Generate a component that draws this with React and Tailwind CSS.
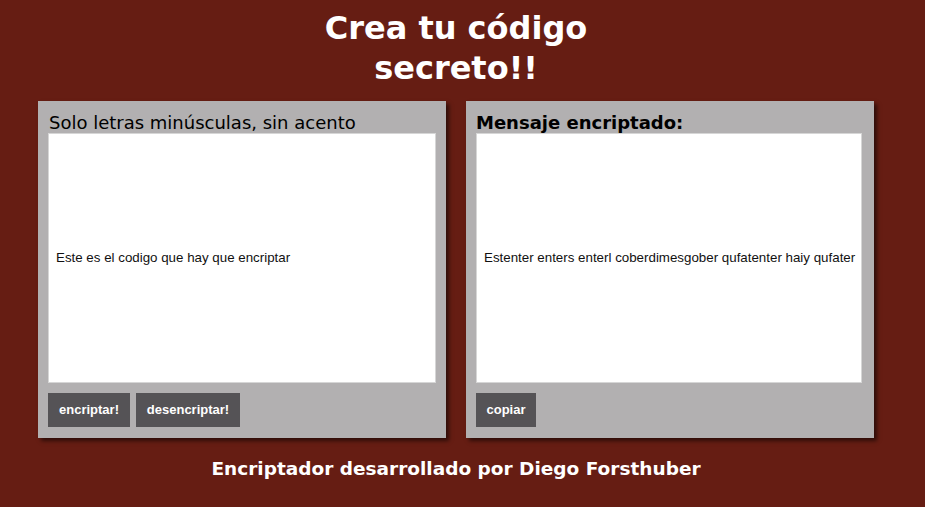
export default function App() {
  return (
    <div className="min-h-[507px] w-full bg-[#661d13] flex flex-col items-center pr-[13px]">
      <h1 className="mt-[8px] w-[300px] text-center text-white font-bold text-[32px] leading-[40px] font-['DejaVu_Sans',sans-serif]">
        Crea tu código secreto!!
      </h1>
      <div className="mt-[13px] flex gap-[20px]">
        <div className="w-[408px] h-[337px] bg-[#b2b0b1] shadow-[3px_3px_4px_rgba(0,0,0,0.55)] pt-[11px] pl-[10px] pr-[10px] flex flex-col">
          <div className="text-[18px] leading-[21px] text-black font-['DejaVu_Sans',sans-serif] pl-[1px]">
            Solo letras minúsculas, sin acento
          </div>
          <div className="h-[250px] bg-white border border-[#d6d6d6] flex items-center px-[7px] text-[13.33px] text-[#111] font-['Liberation_Sans',Arial,sans-serif]">
            Este es el codigo que hay que encriptar
          </div>
          <div className="mt-[10px] flex gap-[6px]">
            <button className="h-[34px] w-[82px] bg-[#555356] text-white font-bold text-[13px] font-['Liberation_Sans',Arial,sans-serif]">
              encriptar!
            </button>
            <button className="h-[34px] w-[104px] bg-[#555356] text-white font-bold text-[13px] font-['Liberation_Sans',Arial,sans-serif]">
              desencriptar!
            </button>
          </div>
        </div>
        <div className="w-[408px] h-[337px] bg-[#b2b0b1] shadow-[3px_3px_4px_rgba(0,0,0,0.55)] pt-[11px] pl-[10px] pr-[12px] flex flex-col">
          <div className="text-[18px] leading-[21px] text-black font-bold font-['DejaVu_Sans',sans-serif]">
            Mensaje encriptado:
          </div>
          <div className="h-[250px] bg-white border border-[#d6d6d6] flex items-center px-[7px] text-[13.33px] text-[#111] font-['Liberation_Sans',Arial,sans-serif] whitespace-nowrap">
            Estenter enters enterl coberdimesgober qufatenter haiy qufater
          </div>
          <div className="mt-[10px] flex gap-[6px]">
            <button className="h-[34px] w-[60px] bg-[#555356] text-white font-bold text-[13px] font-['Liberation_Sans',Arial,sans-serif]">
              copiar
            </button>
          </div>
        </div>
      </div>
      <div className="mt-[19px] text-white font-bold text-[18.5px] leading-[24px] font-['DejaVu_Sans',sans-serif]">
        Encriptador desarrollado por Diego Forsthuber
      </div>
    </div>
  );
}
